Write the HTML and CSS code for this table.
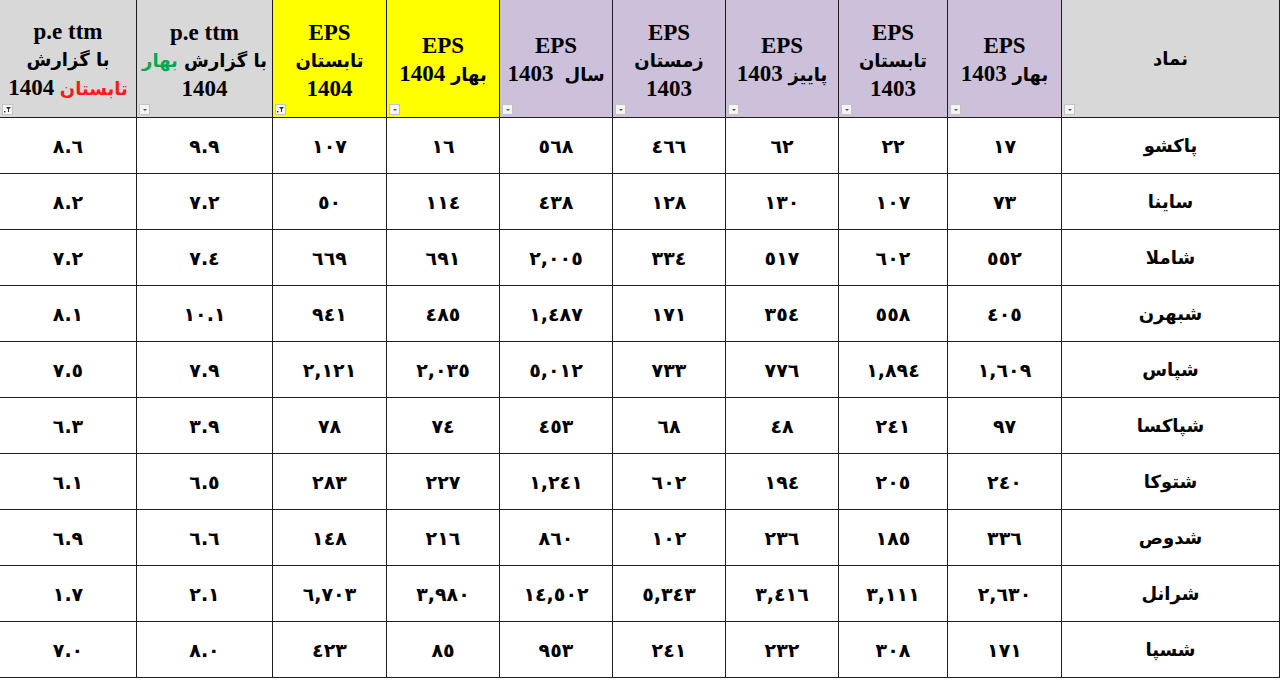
FILE: index.html
```html
<!DOCTYPE html>
<html lang="fa" dir="rtl">
<head>
<meta charset="utf-8">
<title>EPS</title>
<link rel="stylesheet" href="styles.css">
</head>
<body>
<table class="sheet">
  <colgroup>
    <col class="c-name">
    <col class="c-114">
    <col class="c-109">
    <col class="c-113">
    <col class="c-113">
    <col class="c-113">
    <col class="c-113">
    <col class="c-114">
    <col class="c-136">
    <col class="c-137">
  </colgroup>
  <thead>
    <tr>
      <th class="h-gray"><div class="hc hc-name"><span class="fa">نماد</span><i class="dd"></i></div></th>
      <th class="h-purple"><div class="hc"><span class="lat">EPS</span><span><span class="fa">بهار</span> <span class="lat">1403</span></span><i class="dd"></i></div></th>
      <th class="h-purple"><div class="hc"><span class="lat">EPS</span><span class="fa">تابستان</span><span class="lat">1403</span><i class="dd"></i></div></th>
      <th class="h-purple"><div class="hc"><span class="lat">EPS</span><span><span class="fa">پاییز</span> <span class="lat">1403</span></span><i class="dd"></i></div></th>
      <th class="h-purple"><div class="hc"><span class="lat">EPS</span><span class="fa">زمستان</span><span class="lat">1403</span><i class="dd"></i></div></th>
      <th class="h-purple"><div class="hc"><span class="lat">EPS</span><span><span class="fa">سال</span>&nbsp; <span class="lat">1403</span></span><i class="dd"></i></div></th>
      <th class="h-yellow"><div class="hc"><span class="lat">EPS</span><span><span class="fa">بهار</span> <span class="lat">1404</span></span><i class="dd"></i></div></th>
      <th class="h-yellow"><div class="hc"><span class="lat">EPS</span><span class="fa">تابستان</span><span class="lat">1404</span><i class="dd dd-filter"><svg viewBox="0 0 11 11" width="11" height="11"><path d="M4 3h5l-2 2.2v2.8h-1v-2.8z" fill="#333"/><rect x="2" y="7" width="1.4" height="1.4" fill="#333"/></svg></i></div></th>
      <th class="h-gray"><div class="hc"><span class="lat">p.e ttm</span><span class="fa">با گزارش <span class="green">بهار</span></span><span class="lat">1404</span><i class="dd"></i></div></th>
      <th class="h-gray"><div class="hc"><span class="lat">p.e ttm</span><span class="fa">با گزارش</span><span><span class="fa red">تابستان</span> <span class="lat">1404</span></span><i class="dd dd-filter"><svg viewBox="0 0 11 11" width="11" height="11"><path d="M4 3h5l-2 2.2v2.8h-1v-2.8z" fill="#333"/><rect x="2" y="7" width="1.4" height="1.4" fill="#333"/></svg></i></div></th>
    </tr>
  </thead>
  <tbody>
    <tr><td class="name">پاکشو</td><td>١٧</td><td>٢٢</td><td>٦٢</td><td>٤٦٦</td><td class="gl">٥٦٨</td><td>١٦</td><td>١٠٧</td><td>٩.٩</td><td>٨.٦</td></tr>
    <tr><td class="name">ساینا</td><td>٧٣</td><td>١٠٧</td><td>١٣٠</td><td>١٢٨</td><td class="gl">٤٣٨</td><td>١١٤</td><td>٥٠</td><td>٧.٢</td><td>٨.٢</td></tr>
    <tr><td class="name">شاملا</td><td>٥٥٢</td><td>٦٠٢</td><td>٥١٧</td><td>٣٣٤</td><td class="gl">٢,٠٠٥</td><td>٦٩١</td><td>٦٦٩</td><td>٧.٤</td><td>٧.٢</td></tr>
    <tr><td class="name">شبهرن</td><td>٤٠٥</td><td>٥٥٨</td><td>٣٥٤</td><td>١٧١</td><td class="gl">١,٤٨٧</td><td>٤٨٥</td><td>٩٤١</td><td>١٠.١</td><td>٨.١</td></tr>
    <tr><td class="name">شپاس</td><td>١,٦٠٩</td><td>١,٨٩٤</td><td>٧٧٦</td><td>٧٣٣</td><td class="gl">٥,٠١٢</td><td>٢,٠٣٥</td><td>٢,١٢١</td><td>٧.٩</td><td>٧.٥</td></tr>
    <tr><td class="name">شپاکسا</td><td>٩٧</td><td>٢٤١</td><td>٤٨</td><td>٦٨</td><td class="gl">٤٥٣</td><td>٧٤</td><td>٧٨</td><td>٣.٩</td><td>٦.٣</td></tr>
    <tr><td class="name">شتوکا</td><td>٢٤٠</td><td>٢٠٥</td><td>١٩٤</td><td>٦٠٢</td><td class="gl">١,٢٤١</td><td>٢٢٧</td><td>٢٨٣</td><td>٦.٥</td><td>٦.١</td></tr>
    <tr><td class="name">شدوص</td><td>٣٣٦</td><td>١٨٥</td><td>٢٣٦</td><td>١٠٢</td><td class="gl">٨٦٠</td><td>٢١٦</td><td>١٤٨</td><td>٦.٦</td><td>٦.٩</td></tr>
    <tr><td class="name">شرانل</td><td>٢,٦٣٠</td><td>٣,١١١</td><td>٣,٤١٦</td><td>٥,٣٤٣</td><td class="gl">١٤,٥٠٢</td><td>٣,٩٨٠</td><td>٦,٧٠٣</td><td>٢.١</td><td>١.٧</td></tr>
    <tr><td class="name">شسپا</td><td>١٧١</td><td>٣٠٨</td><td>٢٣٢</td><td>٢٤١</td><td class="gl">٩٥٣</td><td>٨٥</td><td>٤٢٣</td><td>٨.٠</td><td>٧.٠</td></tr>
  </tbody>
</table>
</body>
</html>
```

FILE: styles.css
```css
html, body {
  margin: 0;
  padding: 0;
  background: #ffffff;
}

body {
  width: 1280px;
  height: 680px;
  overflow: hidden;
  font-family: "DejaVu Sans", sans-serif;
  color: #000;
}

.sheet {
  direction: rtl;
  border-collapse: collapse;
  table-layout: fixed;
  width: 1280px;
}

.c-name { width: 218px; }
.c-114 { width: 114px; }
.c-109 { width: 109px; }
.c-113 { width: 113px; }
.c-136 { width: 136px; }
.c-137 { width: 137px; }

.sheet th,
.sheet td {
  border: 1px solid #1e1e1e;
  padding: 0;
  text-align: center;
  vertical-align: middle;
}

.sheet thead th {
  border-top: none;
  height: 117px;
  font-weight: bold;
}

.h-gray { background: #d8d8d8; }
.h-purple { background: #ccc0da; }
.h-yellow { background: #ffff00; }

.hc {
  position: relative;
  height: 117px;
  display: flex;
  flex-direction: column;
  align-items: center;
  justify-content: center;
  padding-top: 4px;
  box-sizing: border-box;
}

.hc-name {
  padding-top: 0;
}

.hc > span {
  line-height: 28px;
  white-space: nowrap;
}

.lat {
  font-family: "Liberation Serif", "DejaVu Sans", serif;
  font-size: 23px;
  font-weight: bold;
}

.fa {
  font-family: "DejaVu Sans", sans-serif;
  font-size: 18px;
  font-weight: bold;
}

.green { color: #00a84f; }
.red { color: #ff1a1a; }

.dd {
  position: absolute;
  left: 2px;
  bottom: 2px;
  width: 11px;
  height: 11px;
  box-sizing: border-box;
  background: #f4f4f4;
  border: 1px solid #c4c4c4;
}

.dd::after {
  content: "";
  position: absolute;
  left: 3px;
  top: 4px;
  border-left: 2px solid transparent;
  border-right: 2px solid transparent;
  border-top: 2px solid #555;
}

.dd-filter::after {
  display: none;
}

.dd svg {
  position: absolute;
  left: -1px;
  top: -1px;
  display: block;
}

.sheet tbody td {
  height: 55px;
  font-size: 19px;
  font-weight: bold;
}

.sheet tbody td.name {
  font-size: 18px;
}

.sheet tbody td.gl {
  border-right-color: #7a7a7a;
}
```
